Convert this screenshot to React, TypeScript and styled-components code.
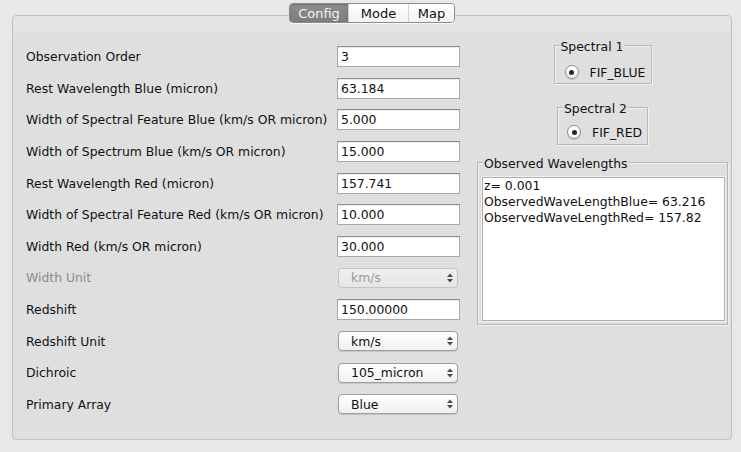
import { Fragment } from 'react';
import styled, { createGlobalStyle, css } from 'styled-components';

const GlobalStyle = createGlobalStyle`
  html, body {
    margin: 0;
    padding: 0;
    background: #e8e8e8;
  }
`;

const Window = styled.div`
  width: 741px;
  height: 452px;
  box-sizing: border-box;
  padding: 3px 9px 0 12px;
  background: #e8e8e8;
  font-family: 'DejaVu Sans', 'Liberation Sans', sans-serif;
  font-size: 12.4px;
  color: #111;
`;

const TabBar = styled.div`
  position: relative;
  z-index: 1;
  display: flex;
  justify-content: center;
  margin-bottom: -8px;
`;

const Segments = styled.div`
  display: flex;
  height: 20px;
  box-sizing: border-box;
  border: 1px solid #8c8c8c;
  border-radius: 4px;
  overflow: hidden;
  font-size: 13px;
  box-shadow: 0 1px 0 rgba(255, 255, 255, 0.7);
`;

const Segment = styled.div<{ $active?: boolean; $w: number }>`
  width: ${({ $w }) => $w}px;
  display: flex;
  align-items: center;
  justify-content: center;
  box-sizing: border-box;
  background: linear-gradient(#ffffff, #f3f3f3);
  color: #111;

  & + & {
    border-left: 1px solid #d2d2d2;
  }

  ${({ $active }) =>
    $active &&
    css`
      background: linear-gradient(#8f8f8f, #7c7c7c);
      color: #f4f4f4;
      box-shadow: inset 0 1px 2px rgba(0, 0, 0, 0.25);
    `}
`;

const Panel = styled.div`
  width: 720px;
  height: 425px;
  box-sizing: border-box;
  border: 1px solid #c2c2c2;
  border-radius: 4px;
  background: linear-gradient(#e4e4e4 0, #e4e4e4 16px, #dfdfdf 17px);
  padding: 0 0 0 13px;
  display: flex;
  align-items: flex-start;
`;

const Form = styled.div`
  margin-top: 25px;
  display: grid;
  grid-template-columns: 311px 122px;
  grid-auto-rows: 31.6px;
  align-items: center;
`;

const Label = styled.span<{ $disabled?: boolean }>`
  color: ${({ $disabled }) => ($disabled ? '#8c8c8c' : '#111')};
  white-space: nowrap;
`;

const TextField = styled.input`
  width: 123px;
  height: 21px;
  box-sizing: border-box;
  margin: 0;
  border: 1px solid #a8a8a8;
  border-top-color: #8c8c8c;
  box-shadow: inset 0 1px 0 #ececec;
  background: #fff;
  padding: 0 3px;
  font: inherit;
  color: #111;
  outline: none;
`;

const Select = styled.div<{ $disabled?: boolean }>`
  width: 120px;
  height: 20px;
  margin-left: 1px;
  box-sizing: border-box;
  border: 1px solid #9e9e9e;
  border-radius: 4px;
  background: linear-gradient(#ffffff, #f0f0f0);
  box-shadow: 0 1px 1px rgba(0, 0, 0, 0.12);
  display: flex;
  align-items: center;
  justify-content: space-between;
  padding: 0 4px 0 12px;
  color: #111;

  ${({ $disabled }) =>
    $disabled &&
    css`
      border-color: #c4c4c4;
      background: linear-gradient(#efefef, #e6e6e6);
      box-shadow: none;
      color: #9a9a9a;
    `}
`;

const Side = styled.div`
  width: 251px;
  margin-left: 18px;
  display: flex;
  flex-direction: column;
  align-items: center;
`;

const Group = styled.div<{ $w: number; $h: number; $top: number }>`
  position: relative;
  width: ${({ $w }) => $w}px;
  height: ${({ $h }) => $h}px;
  margin-top: ${({ $top }) => $top}px;
  box-sizing: border-box;
  border: 1px solid #b6b6b6;
  box-shadow: inset 1px 1px 0 #f2f2f2, 1px 1px 0 #f2f2f2;
  display: flex;
  flex-direction: column;
`;

const GroupTitle = styled.span`
  position: absolute;
  top: -6px;
  left: 5px;
  padding: 0 1px;
  line-height: 14px;
  background: #dfdfdf;
  white-space: nowrap;
`;

const Option = styled.div<{ $pad: string }>`
  padding: ${({ $pad }) => $pad};
  display: flex;
  align-items: center;
  gap: 11px;
  height: 14px;
`;

const Radio = styled.span`
  width: 14px;
  height: 14px;
  flex: none;
  box-sizing: border-box;
  border-radius: 50%;
  border: 1px solid #8e8e8e;
  background: radial-gradient(circle at 50% 35%, #ffffff 40%, #e2e2e2 100%);
  box-shadow: 0 1px 1px rgba(0, 0, 0, 0.15);
  display: flex;
  align-items: center;
  justify-content: center;

  &::after {
    content: '';
    width: 5px;
    height: 5px;
    border-radius: 50%;
    background: #262626;
  }
`;

const Output = styled.div`
  flex: 1;
  margin: 14px 2px 3px 4px;
  border: 1px solid #b0b0b0;
  box-shadow: 0 0 0 1px #f0f0f0;
  background: #fff;
  padding: 0 1px;
  line-height: 16px;
  white-space: pre;
`;

const Arrows = () => (
  <svg width="6" height="10" viewBox="0 0 6 10">
    <path d="M0 4 L3 0.5 L6 4 Z" fill="#4a4a4a" />
    <path d="M0 6 L3 9.5 L6 6 Z" fill="#4a4a4a" />
  </svg>
);

type Row = {
  label: string;
  value: string;
  select?: boolean;
  disabled?: boolean;
};

const rows: Row[] = [
  { label: 'Observation Order', value: '3' },
  { label: 'Rest Wavelength Blue (micron)', value: '63.184' },
  { label: 'Width of Spectral Feature Blue (km/s OR micron)', value: '5.000' },
  { label: 'Width of Spectrum Blue (km/s OR micron)', value: '15.000' },
  { label: 'Rest Wavelength Red (micron)', value: '157.741' },
  { label: 'Width of Spectral Feature Red (km/s OR micron)', value: '10.000' },
  { label: 'Width Red (km/s OR micron)', value: '30.000' },
  { label: 'Width Unit', value: 'km/s', select: true, disabled: true },
  { label: 'Redshift', value: '150.00000' },
  { label: 'Redshift Unit', value: 'km/s', select: true },
  { label: 'Dichroic', value: '105_micron', select: true },
  { label: 'Primary Array', value: 'Blue', select: true },
];

export default function App() {
  return (
    <Window>
      <GlobalStyle />
      <TabBar>
        <Segments>
          <Segment $active $w={58}>Config</Segment>
          <Segment $w={60}>Mode</Segment>
          <Segment $w={46}>Map</Segment>
        </Segments>
      </TabBar>
      <Panel>
        <Form>
          {rows.map((r) => (
            <Fragment key={r.label}>
              <Label $disabled={r.disabled}>{r.label}</Label>
              {r.select ? (
                <Select $disabled={r.disabled}>
                  {r.value}
                  <Arrows />
                </Select>
              ) : (
                <TextField readOnly value={r.value} />
              )}
            </Fragment>
          ))}
        </Form>
        <Side>
          <Group $w={98} $h={39} $top={29}>
            <GroupTitle>Spectral 1</GroupTitle>
            <Option $pad="19px 0 0 10px">
              <Radio />
              FIF_BLUE
            </Option>
          </Group>
          <Group $w={91} $h={38} $top={23}>
            <GroupTitle>Spectral 2</GroupTitle>
            <Option $pad="17px 0 0 9px">
              <Radio />
              FIF_RED
            </Option>
          </Group>
          <Group $w={251} $h={163} $top={17}>
            <GroupTitle>Observed Wavelengths</GroupTitle>
            <Output>
              {'z= 0.001\nObservedWaveLengthBlue= 63.216\nObservedWaveLengthRed= 157.82'}
            </Output>
          </Group>
        </Side>
      </Panel>
    </Window>
  );
}
